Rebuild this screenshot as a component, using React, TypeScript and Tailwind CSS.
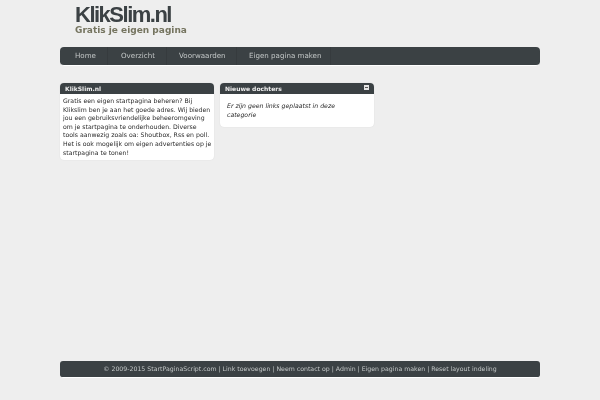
export default function App() {
  const dv = "font-['DejaVu_Sans',sans-serif]";
  return (
    <div className={`w-[600px] h-[400px] bg-[#eeeeee] flex flex-col items-center overflow-hidden ${dv}`}>
      <div className="w-[480px] flex flex-col [will-change:opacity]">
        <div className="h-[47px] pl-[15px] pt-[4px] flex flex-col">
          <div className="font-['Liberation_Sans',sans-serif] font-bold text-[22px] leading-[21px] tracking-[-1.5px] text-[#3b4144]">KlikSlim.nl</div>
          <div className="font-bold text-[9px] leading-[10px] text-[#75745f]">Gratis je eigen pagina</div>
        </div>
        <nav className="h-[18px] rounded-[4px] bg-[#3b4144] border-b border-[#ffffff] box-content flex text-[7.1px] leading-[18px] text-[#c4c8c8] whitespace-nowrap">
          <span className="pl-[15px] w-[48px] border-r border-[#363b3e]">Home</span>
          <span className="pl-[13px] w-[59px] border-r border-[#363b3e]">Overzicht</span>
          <span className="pl-[12px] w-[70px] border-r border-[#363b3e]">Voorwaarden</span>
          <span className="pl-[12px] w-[94px] border-r border-[#363b3e]">Eigen pagina maken</span>
        </nav>
        <div className="mt-[17px] flex items-start gap-[6px] h-[278px]">
          <section className="w-[154px] rounded-[4px] bg-white shadow-[0_0_1px_#cccccc]">
            <h2 className="h-[11px] rounded-t-[4px] bg-[#3b4144] pl-[5px] text-[6px] leading-[11px] font-bold text-[#f0f0f0]">KlikSlim.nl</h2>
            <p className="px-[3px] pt-[3px] pb-[3px] text-[6.2px] leading-[8.6px] text-[#2a2a2a] whitespace-nowrap">
              Gratis een eigen startpagina beheren? Bij<br />
              Klikslim ben je aan het goede adres. Wij bieden<br />
              jou een gebruiksvriendelijke beheeromgeving<br />
              om je startpagina te onderhouden. Diverse<br />
              tools aanwezig zoals oa: Shoutbox, Rss en poll.<br />
              Het is ook mogelijk om eigen advertenties op je<br />
              startpagina te tonen!
            </p>
          </section>
          <section className="w-[154px] rounded-[4px] bg-white shadow-[0_0_1px_#cccccc]">
            <h2 className="relative h-[11px] rounded-t-[4px] bg-[#3b4144] pl-[5px] text-[6px] leading-[11px] font-bold text-[#f0f0f0]">
              Nieuwe dochters
              <span className="absolute right-[5px] top-[2px] w-[5px] h-[5px] bg-[#e4e4e4] flex items-center justify-center">
                <span className="w-[3px] h-[1px] bg-[#555555]" />
              </span>
            </h2>
            <p className="pl-[7px] pr-[3px] pt-[7px] pb-[8px] text-[6.2px] leading-[9px] italic text-[#2a2a2a]">
              Er zijn geen links geplaatst in deze<br />categorie
            </p>
          </section>
        </div>
        <footer className="h-[16px] rounded-[3px] bg-[#3b4144] border-b border-[#ffffff] box-content text-center text-[6.22px] leading-[16px] text-[#c4c8c8] whitespace-nowrap">
          © 2009-2015 StartPaginaScript.com | Link toevoegen | Neem contact op | Admin | Eigen pagina maken | Reset layout indeling
        </footer>
      </div>
    </div>
  );
}
